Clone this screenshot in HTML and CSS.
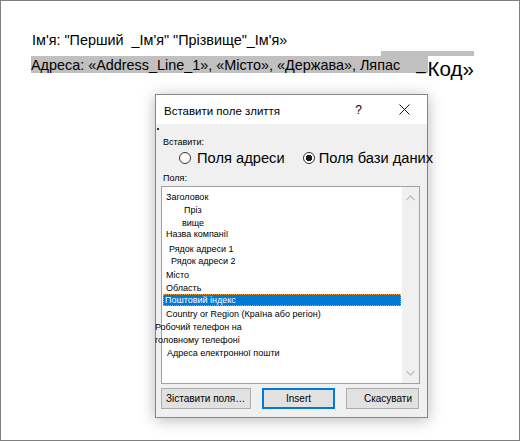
FILE: index.html
```html
<!DOCTYPE html>
<html lang="uk">
<head>
<meta charset="utf-8">
<link rel="stylesheet" href="styles.css">
</head>
<body>
<div class="page">
  <div class="doc">
    <p class="line line1">Ім'я: "Перший &nbsp;_Ім'я" "Прізвище"_Ім'я»</p>
    <div class="line line2">
      <span class="hl">Адреса: «Address_Line_1», «Місто», «Держава», Ляпас &nbsp;&nbsp;&nbsp;<span class="under">_</span></span><span class="big">Код»</span>
      <span class="strip"></span>
    </div>
  </div>

  <div class="dialog">
    <div class="titlebar">
      <span class="title">Вставити поле злиття</span>
      <span class="help">?</span>
      <svg class="close" width="11" height="11" viewBox="0 0 11 11"><path d="M0.5 0.5L10.5 10.5M10.5 0.5L0.5 10.5" stroke="#111" stroke-width="1" fill="none"/></svg>
    </div>
    <div class="dbody">
      <div class="dot"></div>
      <div class="label label-insert">Вставити:</div>
      <div class="radios">
        <span class="radio"></span><span class="rtext">Поля адреси</span>
        <span class="radio checked"></span><span class="rtext rtext2">Поля бази даних</span>
      </div>
      <div class="label label-fields">Поля:</div>
      <div class="listbox">
        <div class="items">
          <div class="item">Заголовок</div>
          <div class="item in-18">Пріз</div>
          <div class="item in-16">вище</div>
          <div class="item up-2">Назва компанії</div>
          <div class="item in-3 down-2">Рядок адреси 1</div>
          <div class="item in-5 up-1">Рядок адреси 2</div>
          <div class="item down-1">Місто</div>
          <div class="item">Область</div>
          <div class="item selected up-2">Поштовий індекс</div>
          <div class="item down-2">Country or Region (Країна або регіон)</div>
          <div class="item out">Робочий телефон на</div>
          <div class="item out">головному телефоні</div>
          <div class="item in-1">Адреса електронної пошти</div>
        </div>
        <div class="scrollbar">
          <svg width="9" height="6" viewBox="0 0 9 6"><path d="M0.5 5L4.5 1L8.5 5" stroke="#c2c2c2" stroke-width="1.5" fill="none"/></svg>
          <svg width="9" height="6" viewBox="0 0 9 6"><path d="M0.5 1L4.5 5L8.5 1" stroke="#c2c2c2" stroke-width="1.5" fill="none"/></svg>
        </div>
      </div>
      <div class="buttons">
        <button class="btn btn-map">Зіставити поля…</button>
        <button class="btn btn-insert">Insert</button>
        <button class="btn btn-cancel">Скасувати</button>
      </div>
    </div>
  </div>
</div>
</body>
</html>
```

FILE: styles.css
```css
* { box-sizing: border-box; }
html, body { margin: 0; padding: 0; background: #fff; }
body { font-family: "Liberation Sans", Arial, sans-serif; color: #000; }

.page {
  position: relative;
  width: 520px;
  height: 441px;
  border: 1px solid #7f7f7f;
  background: #fff;
  overflow: hidden;
}

.doc { padding: 31px 0 0 30px; }
.line { margin: 0; font-size: 14.4px; line-height: 17px; white-space: nowrap; }
.line1 { padding-left: 1px; }
.line2 {
  position: relative;
  margin-top: 7px;
  height: 17px;
  display: flex;
  align-items: flex-start;
}
.hl { background: #c0c0c0; height: 17px; padding-right: 2px; }
.under { font-size: 17px; line-height: 17px; }
.big { font-size: 20.5px; line-height: 21px; margin-top: 2px; }
.strip {
  position: absolute;
  left: 350px;
  top: -5px;
  width: 93px;
  height: 5px;
  background: #c0c0c0;
}

.dialog {
  position: absolute;
  left: 154px;
  top: 93px;
  width: 273px;
  height: 324px;
  border: 1px solid #868686;
  background: #f0f0f0;
  box-shadow: 0 2px 14px rgba(0, 0, 0, 0.28);
  display: flex;
  flex-direction: column;
}

.titlebar {
  height: 29px;
  background: #fff;
  display: flex;
  align-items: center;
  padding-left: 8px;
  font-size: 11.5px;
}
.title { flex: 1; padding-top: 2px; }
.help { font-size: 12px; margin-right: 37px; padding-top: 1px; }
.close { margin-right: 17px; }

.dbody { flex: 1; padding: 0 6px 0 5px; font-size: 9px; }
.dot { width: 2px; height: 2px; background: #333; margin: 4px 0 0 -4px; }
.label { height: 12px; line-height: 12px; padding-left: 2px; }
.label-insert { margin-top: 6px; }
.label-fields { margin-top: 5px; }

.radios {
  margin-top: 1px;
  height: 18px;
  display: flex;
  align-items: center;
  padding-left: 18px;
  font-size: 14.7px;
  white-space: nowrap;
}
.radio {
  width: 12px;
  height: 12px;
  border-radius: 50%;
  border: 1px solid #333;
  background: #fff;
  flex: none;
}
.radio.checked { background: radial-gradient(circle, #1a1a1a 0 3px, #fff 3.5px); }
.rtext { margin-left: 6px; margin-right: 18px; }
.rtext2 { margin-left: 4px; margin-right: 0; }

.listbox {
  margin-top: 2px;
  height: 198px;
  width: 259px;
  border: 1px solid #a0a0a0;
  background: #fff;
  display: flex;
}
.items { flex: 1; padding-top: 4px; padding-left: 1px; }
.item { height: 13px; line-height: 13px; padding-left: 3px; white-space: nowrap; }
.in-18 { padding-left: 21px; }
.in-16 { padding-left: 19px; }
.in-3 { padding-left: 6px; }
.in-5 { padding-left: 8px; }
.in-1 { padding-left: 4px; }
.up-2 { margin-top: -2px; }
.up-1 { margin-top: -1px; }
.down-1 { margin-top: 1px; }
.down-2 { margin-top: 2px; }
.out { margin-left: -8px; padding-left: 0; }
.item.selected {
  background: #0078d7;
  color: #fff;
  outline: 1px dotted #f09a2a;
  outline-offset: -1px;
  height: 12px;
  line-height: 12px;
  margin-right: 1px;
  padding-left: 2px;
  margin-top: -1px;
}

.scrollbar {
  width: 17px;
  background: #f0f0f0;
  display: flex;
  flex-direction: column;
  justify-content: space-between;
  align-items: center;
  padding: 8px 0 7px;
}

.buttons {
  margin-top: 4px;
  display: flex;
  gap: 11px;
}
.btn {
  height: 21px;
  font-family: "Liberation Sans", Arial, sans-serif;
  font-size: 10px;
  background: #e1e1e1;
  border: 1px solid #adadad;
  color: #000;
  padding: 0;
  margin: 0;
}
.btn-map { width: 90px; padding-left: 4px; text-align: left; }
.btn-insert { width: 73px; border: 2px solid #0078d7; }
.btn-cancel { width: 73px; text-align: right; padding-right: 6px; }
```
